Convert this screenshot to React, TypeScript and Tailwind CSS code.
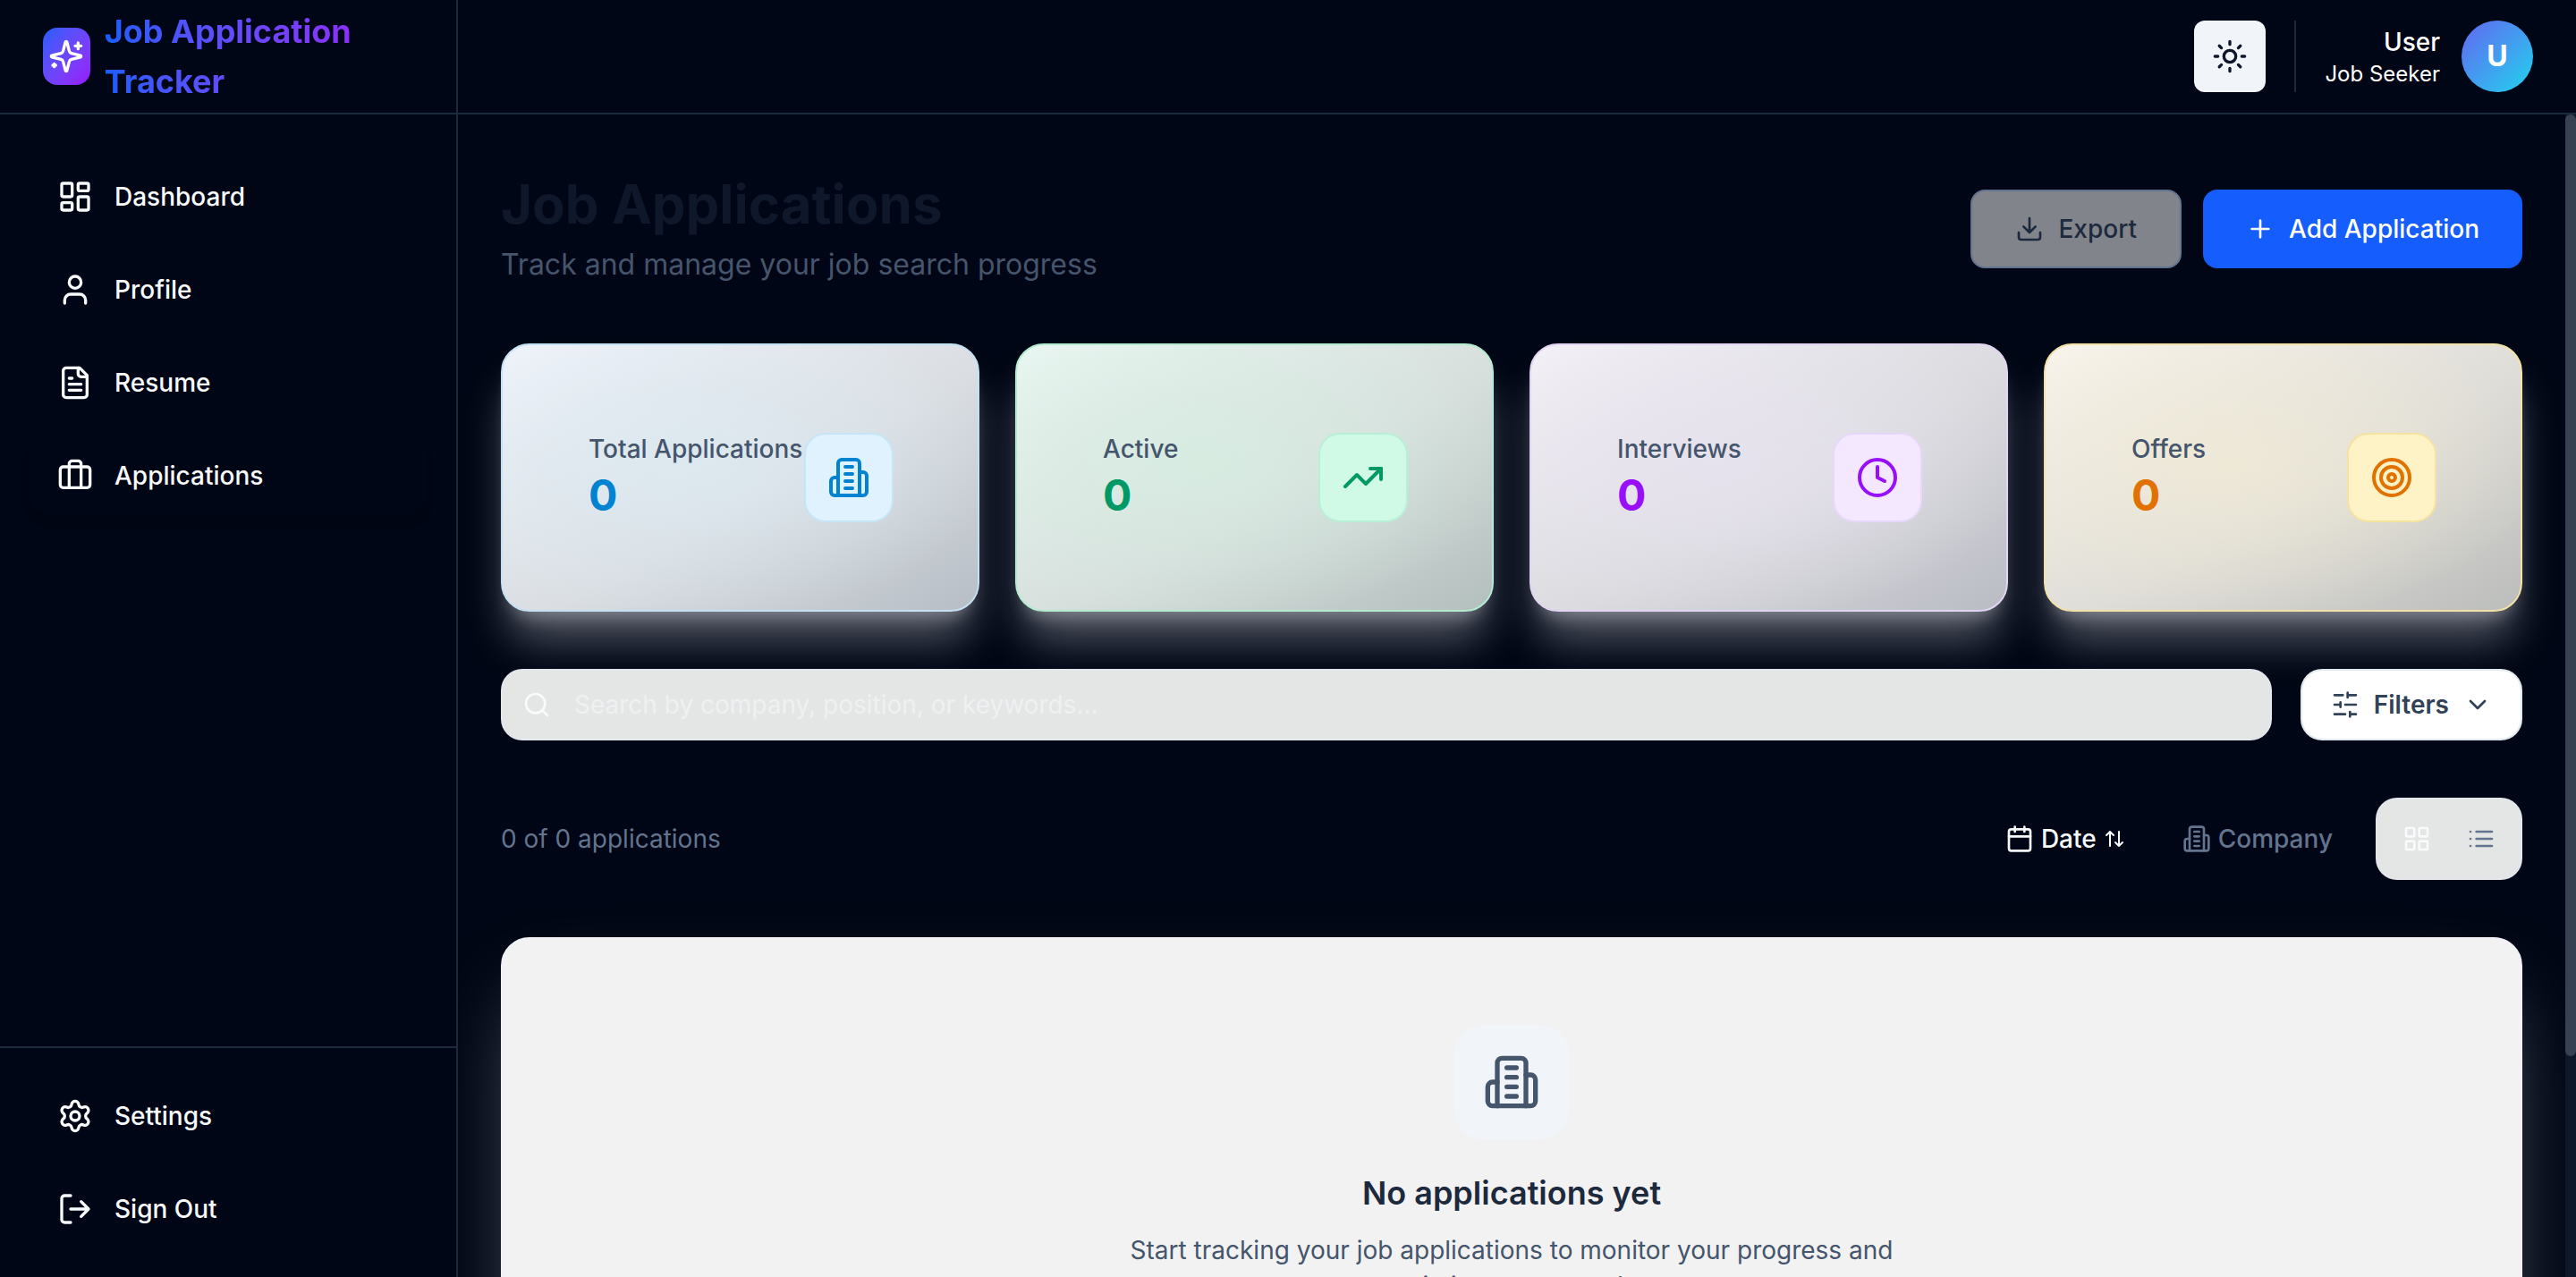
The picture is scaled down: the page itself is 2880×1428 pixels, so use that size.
import type { ReactNode } from "react";

type IconProps = { className?: string };

function Icon({ className, children }: IconProps & { children: ReactNode }) {
  return (
    <svg
      viewBox="0 0 24 24"
      fill="none"
      stroke="currentColor"
      strokeWidth={2}
      strokeLinecap="round"
      strokeLinejoin="round"
      aria-hidden="true"
      className={`shrink-0 ${className ?? ""}`}
    >
      {children}
    </svg>
  );
}

const Sparkles = (p: IconProps) => (
  <Icon {...p}>
    <path d="M9.937 15.5A2 2 0 0 0 8.5 14.063l-6.135-1.582a.5.5 0 0 1 0-.962L8.5 9.936A2 2 0 0 0 9.937 8.5l1.582-6.135a.5.5 0 0 1 .963 0L14.063 8.5A2 2 0 0 0 15.5 9.937l6.135 1.581a.5.5 0 0 1 0 .964L15.5 14.063a2 2 0 0 0-1.437 1.437l-1.582 6.135a.5.5 0 0 1-.963 0z" />
    <path d="M20 3v4M22 5h-4M4 17v2M5 18H3" />
  </Icon>
);

const Dashboard = (p: IconProps) => (
  <Icon {...p}>
    <rect width="7" height="9" x="3" y="3" rx="1" />
    <rect width="7" height="5" x="14" y="3" rx="1" />
    <rect width="7" height="9" x="14" y="12" rx="1" />
    <rect width="7" height="5" x="3" y="16" rx="1" />
  </Icon>
);

const User = (p: IconProps) => (
  <Icon {...p}>
    <path d="M19 21v-2a4 4 0 0 0-4-4H9a4 4 0 0 0-4 4v2" />
    <circle cx="12" cy="7" r="4" />
  </Icon>
);

const FileText = (p: IconProps) => (
  <Icon {...p}>
    <path d="M15 2H6a2 2 0 0 0-2 2v16a2 2 0 0 0 2 2h12a2 2 0 0 0 2-2V7Z" />
    <path d="M14 2v4a2 2 0 0 0 2 2h4M10 9H8M16 13H8M16 17H8" />
  </Icon>
);

const Briefcase = (p: IconProps) => (
  <Icon {...p}>
    <path d="M16 20V4a2 2 0 0 0-2-2h-4a2 2 0 0 0-2 2v16" />
    <rect width="20" height="14" x="2" y="6" rx="2" />
  </Icon>
);

const Settings = (p: IconProps) => (
  <Icon {...p}>
    <path d="M9.671 4.136a2.34 2.34 0 0 1 4.659 0 2.34 2.34 0 0 0 3.319 1.915 2.34 2.34 0 0 1 2.33 4.033 2.34 2.34 0 0 0 0 3.831 2.34 2.34 0 0 1-2.33 4.033 2.34 2.34 0 0 0-3.319 1.915 2.34 2.34 0 0 1-4.659 0 2.34 2.34 0 0 0-3.32-1.915 2.34 2.34 0 0 1-2.33-4.033 2.34 2.34 0 0 0 0-3.831A2.34 2.34 0 0 1 6.35 6.051a2.34 2.34 0 0 0 3.319-1.915" />
    <circle cx="12" cy="12" r="3" />
  </Icon>
);

const LogOut = (p: IconProps) => (
  <Icon {...p}>
    <path d="M9 21H5a2 2 0 0 1-2-2V5a2 2 0 0 1 2-2h4M16 17l5-5-5-5M21 12H9" />
  </Icon>
);

const Sun = (p: IconProps) => (
  <Icon {...p}>
    <circle cx="12" cy="12" r="4" />
    <path d="M12 2v2M12 20v2M4.93 4.93l1.41 1.41M17.66 17.66l1.41 1.41M2 12h2M20 12h2M6.34 17.66l-1.41 1.41M19.07 4.93l-1.41 1.41" />
  </Icon>
);

const Download = (p: IconProps) => (
  <Icon {...p}>
    <path d="M12 15V3M21 15v4a2 2 0 0 1-2 2H5a2 2 0 0 1-2-2v-4M7 10l5 5 5-5" />
  </Icon>
);

const Plus = (p: IconProps) => (
  <Icon {...p}>
    <path d="M5 12h14M12 5v14" />
  </Icon>
);

const Building = (p: IconProps) => (
  <Icon {...p}>
    <path d="M6 22V4a2 2 0 0 1 2-2h8a2 2 0 0 1 2 2v18Z" />
    <path d="M6 12H4a2 2 0 0 0-2 2v6a2 2 0 0 0 2 2h2M18 9h2a2 2 0 0 1 2 2v9a2 2 0 0 1-2 2h-2M10 6h4M10 10h4M10 14h4M10 18h4" />
  </Icon>
);

const TrendingUp = (p: IconProps) => (
  <Icon {...p}>
    <path d="M16 7h6v6" />
    <path d="m22 7-8.5 8.5-5-5L2 17" />
  </Icon>
);

const Clock = (p: IconProps) => (
  <Icon {...p}>
    <circle cx="12" cy="12" r="10" />
    <path d="M12 6v6l4 2" />
  </Icon>
);

const Target = (p: IconProps) => (
  <Icon {...p}>
    <circle cx="12" cy="12" r="10" />
    <circle cx="12" cy="12" r="6" />
    <circle cx="12" cy="12" r="2" />
  </Icon>
);

const Search = (p: IconProps) => (
  <Icon {...p}>
    <circle cx="11" cy="11" r="8" />
    <path d="m21 21-4.34-4.34" />
  </Icon>
);

const Sliders = (p: IconProps) => (
  <Icon {...p}>
    <path d="M21 4h-7M10 4H3M21 12h-9M8 12H3M21 20h-5M12 20H3M14 2v4M8 10v4M16 18v4" />
  </Icon>
);

const ChevronDown = (p: IconProps) => (
  <Icon {...p}>
    <path d="m6 9 6 6 6-6" />
  </Icon>
);

const Calendar = (p: IconProps) => (
  <Icon {...p}>
    <path d="M8 2v4M16 2v4M3 10h18" />
    <rect width="18" height="18" x="3" y="4" rx="2" />
  </Icon>
);

const ArrowUpDown = (p: IconProps) => (
  <Icon {...p}>
    <path d="m21 16-4 4-4-4M17 20V4M3 8l4-4 4 4M7 4v16" />
  </Icon>
);

const Grid = (p: IconProps) => (
  <Icon {...p}>
    <rect width="7" height="7" x="3" y="3" rx="1" />
    <rect width="7" height="7" x="14" y="3" rx="1" />
    <rect width="7" height="7" x="14" y="14" rx="1" />
    <rect width="7" height="7" x="3" y="14" rx="1" />
  </Icon>
);

const List = (p: IconProps) => (
  <Icon {...p}>
    <path d="M3 12h.01M3 18h.01M3 6h.01M8 12h13M8 18h13M8 6h13" />
  </Icon>
);

type IconType = (p: IconProps) => ReactNode;

function NavItem({ icon: I, label, active }: { icon: IconType; label: string; active?: boolean }) {
  return (
    <a
      href="#"
      aria-current={active ? "page" : undefined}
      className={`flex h-22 items-center gap-6 rounded-3xl px-8 text-[28px]/[40px] font-medium text-slate-50 ${
        active ? "shadow-[0_8px_12px_-2px_rgba(0,0,0,0.12)]" : ""
      }`}
    >
      <I className="size-10" />
      {label}
    </a>
  );
}

type Stat = { label: string; value: number; icon: IconType; card: string; text: string; tile: string };

const stats: Stat[] = [
  {
    label: "Total Applications",
    value: 0,
    icon: Building,
    card: "border-[#c4e0f3] bg-[radial-gradient(ellipse_at_40%_45%,rgba(220,234,241,0.8),rgba(218,234,242,0)_75%),linear-gradient(to_bottom_right,#f0f4fb,#dadee3_55%,#b6bdc4)]",
    text: "text-sky-600",
    tile: "border-[#c6e6f8] bg-sky-100",
  },
  {
    label: "Active",
    value: 0,
    icon: TrendingUp,
    card: "border-[#b2ebd0] bg-[radial-gradient(ellipse_at_40%_45%,rgba(214,237,225,0.8),rgba(210,236,224,0)_75%),linear-gradient(to_bottom_right,#eaf7f2,#d7dfdd_55%,#b3bfbd)]",
    text: "text-emerald-600",
    tile: "border-[#b8efd8] bg-emerald-100",
  },
  {
    label: "Interviews",
    value: 0,
    icon: Clock,
    card: "border-[#e2d5f3] bg-[radial-gradient(ellipse_at_40%_45%,rgba(232,227,240,0.8),rgba(232,226,240,0)_75%),linear-gradient(to_bottom_right,#f4f1f8,#dbdbdf_55%,#b9bbc3)]",
    text: "text-purple-600",
    tile: "border-[#e7d8fa] bg-purple-100",
  },
  {
    label: "Offers",
    value: 0,
    icon: Target,
    card: "border-[#f2e2a8] bg-[radial-gradient(ellipse_at_40%_45%,rgba(240,234,213,0.8),rgba(240,232,208,0)_75%),linear-gradient(to_bottom_right,#f9f5ed,#dfddd8_55%,#bbbdbb)]",
    text: "text-amber-600",
    tile: "border-[#f5e3a0] bg-amber-100",
  },
];

function StatCard({ stat }: { stat: Stat }) {
  const I = stat.icon;
  return (
    <article
      className={`flex items-center justify-between rounded-4xl border-2 bg-origin-border py-24 pr-[94px] pl-24 shadow-[0_40px_50px_-10px_rgba(241,245,249,0.36),0_16px_20px_-12px_rgba(241,245,249,0.36)] ${stat.card}`}
    >
      <div>
        <p className="text-[28px]/[40px] font-medium whitespace-nowrap text-slate-600">{stat.label}</p>
        <p className={`text-5xl/[64px] font-bold ${stat.text}`}>{stat.value}</p>
      </div>
      <div className={`flex size-25 shrink-0 items-center justify-center rounded-3xl border-2 ${stat.tile} ${stat.text}`}>
        <I className="size-12" />
      </div>
    </article>
  );
}

function Sidebar() {
  return (
    <aside className="flex w-128 shrink-0 flex-col border-r-2 border-slate-800">
      <div className="flex h-32 items-center gap-4 border-b-2 border-slate-800 px-12">
        <div className="flex h-16 w-16 items-center justify-center rounded-2xl bg-gradient-to-br from-blue-600 to-purple-600 text-white">
          <Sparkles className="size-10" />
        </div>
        <span className="bg-gradient-to-r from-blue-600 to-purple-600 bg-clip-text text-4xl/[56px] font-bold text-transparent">
          Job Application Tracker
        </span>
      </div>
      <nav aria-label="Main" className="flex flex-1 flex-col gap-4 px-8 py-12">
        <NavItem icon={Dashboard} label="Dashboard" />
        <NavItem icon={User} label="Profile" />
        <NavItem icon={FileText} label="Resume" />
        <NavItem icon={Briefcase} label="Applications" active />
      </nav>
      <nav aria-label="Account" className="flex flex-col gap-4 border-t-2 border-slate-800 p-8">
        <NavItem icon={Settings} label="Settings" />
        <NavItem icon={LogOut} label="Sign Out" />
      </nav>
    </aside>
  );
}

function TopBar() {
  return (
    <header className="flex h-32 shrink-0 items-center justify-end gap-8 border-b-2 border-slate-800 px-12">
      <button
        type="button"
        aria-label="Toggle theme"
        className="flex size-20 items-center justify-center rounded-xl bg-slate-100 text-slate-900"
      >
        <Sun className="size-10" />
      </button>
      <div className="flex h-20 items-center gap-6 border-l-2 border-slate-800 pl-8">
        <div className="text-right text-white">
          <p className="text-[28px]/[40px] font-medium">User</p>
          <p className="text-2xl/[32px]">Job Seeker</p>
        </div>
        <div className="flex size-20 items-center justify-center rounded-full bg-[linear-gradient(135deg,#6366f1,#22d3ee)] text-[32px]/[48px] font-bold text-white">
          U
        </div>
      </div>
    </header>
  );
}

export default function App() {
  return (
    <div className="flex h-screen overflow-hidden bg-[#000615] font-['Inter',sans-serif] text-[28px]/[40px] text-slate-50">
      <Sidebar />
      <div className="flex min-w-0 flex-1 flex-col">
        <TopBar />
        <div className="flex min-h-0 flex-1">
          <main className="flex min-w-0 flex-1 flex-col gap-16 overflow-y-auto px-12 py-16 [scrollbar-width:none]">
            <div className="flex shrink-0 items-center justify-between">
              <div className="flex flex-col gap-2">
                <h1 className="text-6xl/[72px] font-bold text-slate-900">Job Applications</h1>
                <p className="text-[32px]/[48px] text-slate-600">Track and manage your job search progress</p>
              </div>
              <div className="flex gap-6">
                <button
                  type="button"
                  className="flex h-22 items-center gap-4 rounded-2xl border-2 border-slate-500 bg-[#82848b] px-12 font-medium text-slate-800"
                >
                  <Download className="size-8" />
                  Export
                </button>
                <button
                  type="button"
                  className="flex h-22 items-center gap-4 rounded-2xl bg-blue-600 px-12 font-medium text-white"
                >
                  <Plus className="size-8" />
                  Add Application
                </button>
              </div>
            </div>

            <section aria-label="Statistics" className="grid shrink-0 grid-cols-4 gap-10">
              {stats.map((s) => (
                <StatCard key={s.label} stat={s} />
              ))}
            </section>

            <div className="flex shrink-0 gap-8">
              <label className="flex h-20 flex-1 items-center gap-6.5 rounded-3xl border-2 border-slate-200/60 bg-[#fdfffc]/90 px-5.5">
                <Search className="size-8 text-slate-50" />
                <span className="sr-only">Search applications</span>
                <input
                  type="search"
                  placeholder="Search by company, position, or keywords..."
                  className="min-w-0 flex-1 bg-transparent text-slate-800 outline-none placeholder:text-[#eff0f2]"
                />
              </label>
              <button
                type="button"
                className="flex h-20 items-center gap-4 rounded-3xl border-2 border-slate-200 bg-white px-8 font-semibold text-slate-700"
              >
                <Sliders className="size-8" />
                Filters
                <ChevronDown className="size-8" />
              </button>
            </div>

            <div className="flex shrink-0 items-center justify-between">
              <p className="text-slate-500">0 of 0 applications</p>
              <div className="flex items-center gap-6">
                <div className="flex gap-4">
                  <button type="button" className="flex h-18 items-center gap-2 px-6 font-medium text-slate-50">
                    <Calendar className="size-8" />
                    Date
                    <ArrowUpDown className="size-6" />
                  </button>
                  <button type="button" className="flex h-18 items-center gap-2 px-6 font-medium text-slate-500">
                    <Building className="size-8" />
                    Company
                  </button>
                </div>
                <div className="flex rounded-3xl border-2 border-slate-200/60 bg-[#fdfffc]/90 p-2">
                  <button
                    type="button"
                    aria-label="Grid view"
                    className="flex size-18 items-center justify-center text-slate-50"
                  >
                    <Grid className="size-8" />
                  </button>
                  <button
                    type="button"
                    aria-label="List view"
                    className="flex size-18 items-center justify-center text-slate-500"
                  >
                    <List className="size-8" />
                  </button>
                </div>
              </div>
            </div>

            <section className="flex shrink-0 flex-col items-center rounded-4xl border-2 border-[#f0f0f8] bg-[#f2f2f2] p-24 text-center shadow-[0_50px_100px_-24px_rgba(241,245,249,0.36)]">
              <div className="flex size-32 items-center justify-center rounded-4xl bg-slate-100 text-slate-600">
                <Building className="size-16" />
              </div>
              <h2 className="mt-8 text-4xl/[56px] font-semibold text-slate-800">No applications yet</h2>
              <p className="mt-4 max-w-4xl text-slate-600">
                Start tracking your job applications to monitor your progress and optimize your search.
              </p>
              <button
                type="button"
                className="mt-12 flex h-22 items-center gap-4 rounded-2xl bg-blue-600 px-12 font-medium text-white"
              >
                <Plus className="size-8" />
                Add Application
              </button>
            </section>
          </main>
          <div className="w-3 shrink-0 bg-slate-900" aria-hidden="true">
            <div className="h-[81%] rounded-full bg-[#364152]" />
          </div>
        </div>
      </div>
    </div>
  );
}
